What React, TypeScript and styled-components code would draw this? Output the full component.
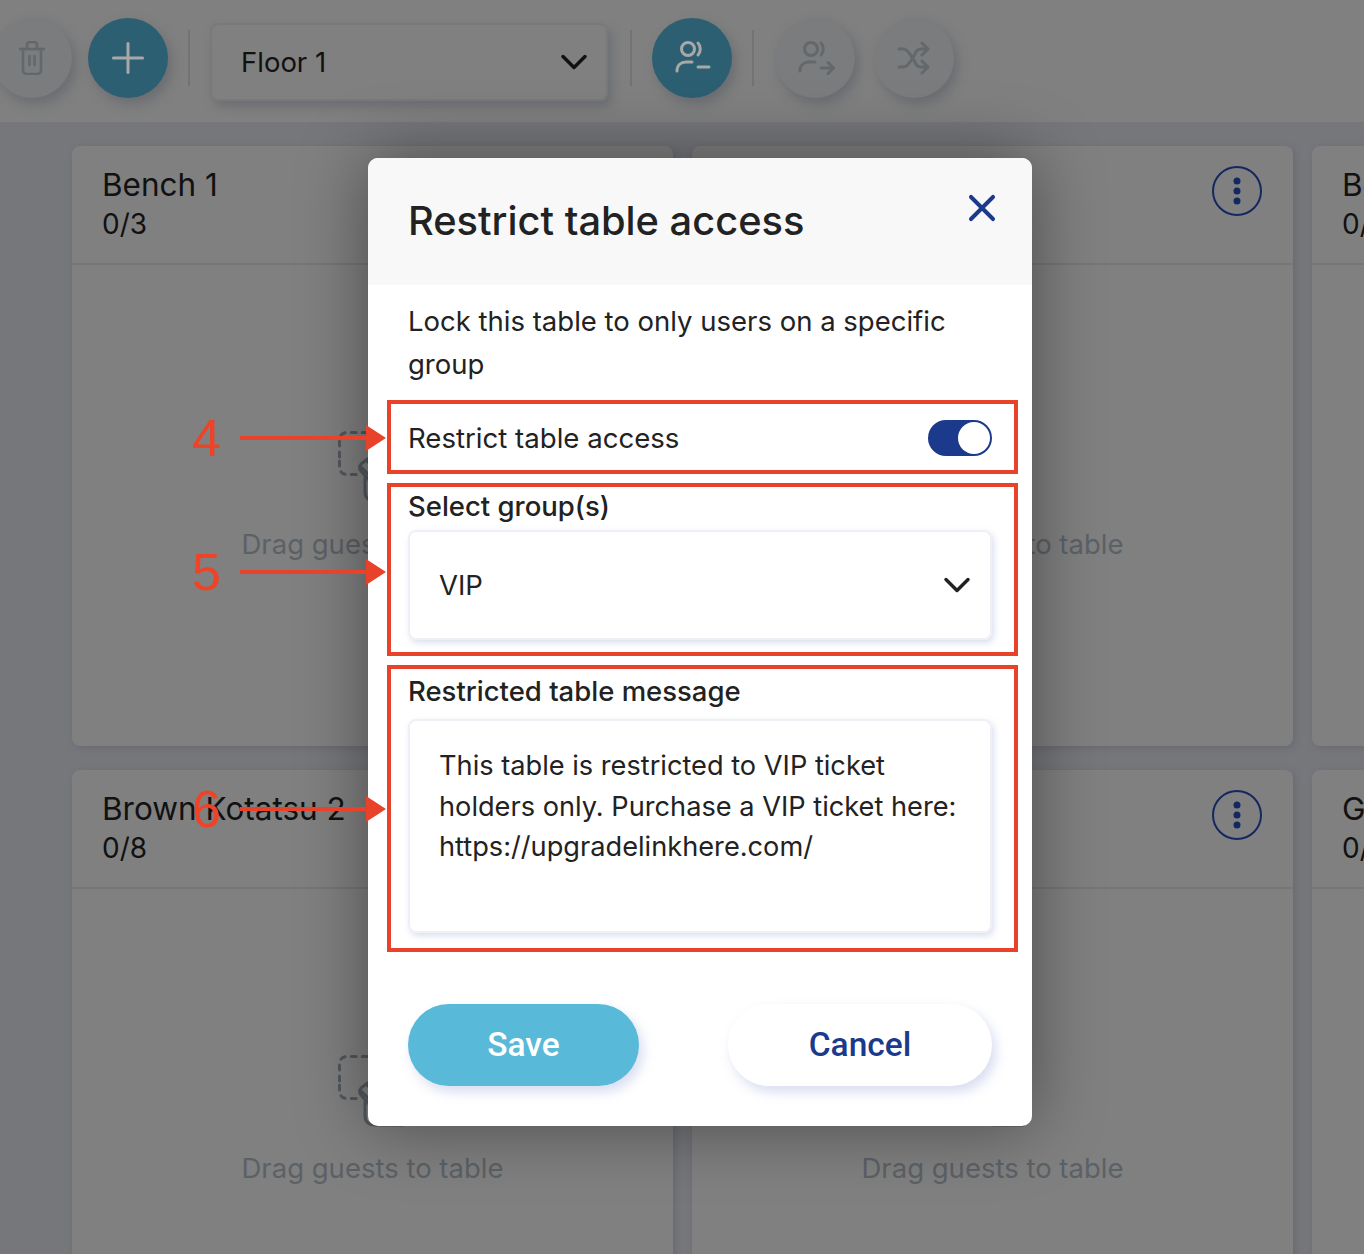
import React from 'react';
import styled, { createGlobalStyle } from 'styled-components';
import { FiChevronDown, FiPlus, FiX } from 'react-icons/fi';

const GlobalStyle = createGlobalStyle`
  html, body { margin: 0; padding: 0; }
  body { font-family: Inter, "Noto Sans", sans-serif; color: #111; }
  * { box-sizing: border-box; }
`;

const Page = styled.div`
  position: relative;
  width: 1364px;
  height: 1254px;
  overflow: hidden;
  background: #76777b;
`;

const Toolbar = styled.div`
  display: flex;
  align-items: center;
  height: 122px;
  padding-bottom: 6px;
  background: #808080;
`;

const RoundButton = styled.div<{ $active?: boolean; $gap: number }>`
  flex: none;
  display: flex;
  align-items: center;
  justify-content: center;
  width: 80px;
  height: 80px;
  margin-left: ${p => p.$gap}px;
  border-radius: 50%;
  color: ${p => (p.$active ? '#a8a8a8' : '#62686b')};
  background: ${p => (p.$active ? '#2c5f72' : '#7b7c7e')};
  box-shadow: 4px 6px 12px rgba(80, 84, 96, 0.45);
`;

const Divider = styled.div<{ $gap: number }>`
  flex: none;
  width: 2px;
  height: 56px;
  margin-left: ${p => p.$gap}px;
  background: #737373;
`;

const FloorSelect = styled.div`
  flex: none;
  display: flex;
  align-items: center;
  justify-content: space-between;
  width: 398px;
  height: 78px;
  margin: 7px 0 0 20px;
  padding: 0 10px 0 29px;
  border: 2px solid #797979;
  border-radius: 8px;
  font-size: 27.5px;
  color: #111;
  box-shadow: 4px 6px 10px rgba(80, 84, 96, 0.4);
`;

const Board = styled.div`
  display: grid;
  grid-template-columns: repeat(3, 601px);
  grid-auto-rows: 600px;
  column-gap: 19px;
  row-gap: 24px;
  padding: 24px 0 0 72px;
`;

const Card = styled.div`
  border-radius: 8px;
  background: #808080;
  box-shadow: 2px 2px 6px rgba(80, 84, 96, 0.35);
`;

const CardHeader = styled.div`
  display: flex;
  justify-content: space-between;
  height: 119px;
  padding: 18px 31px 0 30px;
  border-bottom: 2px solid #767676;
`;

const CardTitle = styled.div`
  font-size: 31.5px;
  line-height: 42px;
  color: #111;
`;

const CardCount = styled.div`
  font-size: 28px;
  line-height: 36px;
  color: #111;
`;

const KebabIcon = styled.svg`
  flex: none;
  margin-top: 2px;
`;

const CardBody = styled.div`
  display: flex;
  flex-direction: column;
  align-items: center;
  padding-top: 166px;
`;

const DragHint = styled.div`
  margin-top: 23px;
  font-size: 27.5px;
  line-height: 36px;
  color: #5c6166;
`;

const Modal = styled.div`
  position: absolute;
  top: 158px;
  left: 368px;
  width: 664px;
  height: 968px;
  border-radius: 10px;
  overflow: hidden;
  background: #fff;
`;

const ModalShadow = styled.div`
  position: absolute;
  top: 158px;
  left: 368px;
  width: 664px;
  height: 968px;
  border-radius: 10px;
  box-shadow: 0 0 70px rgba(0, 0, 0, 0.42);
`;

const ModalHeader = styled.div`
  display: flex;
  justify-content: space-between;
  height: 127px;
  padding: 0 28px 0 40px;
  background: #f8f8f8;
`;

const ModalTitle = styled.h2`
  margin: 36px 0 0;
  font-size: 39.8px;
  line-height: 54px;
  font-weight: 500;
  color: #222;
`;

const CloseButton = styled.div`
  margin-top: 28px;
  height: 44px;
  color: #1b3a8c;
`;

const ModalBody = styled.div`
  padding: 15px 40px 0;
`;

const Intro = styled.p`
  margin: 0;
  font-size: 27.5px;
  line-height: 43px;
  color: #222;
`;

const ToggleRow = styled.div`
  display: flex;
  align-items: center;
  justify-content: space-between;
  height: 36px;
  margin-top: 34px;
  font-size: 27.6px;
  color: #222;
`;

const Toggle = styled.div`
  display: flex;
  justify-content: flex-end;
  align-items: center;
  width: 64px;
  height: 36px;
  padding-right: 2px;
  border-radius: 18px;
  background: #1b3a8c;
`;

const Knob = styled.div`
  width: 32px;
  height: 32px;
  border-radius: 50%;
  background: #fff;
`;

const FieldLabel = styled.div<{ $top: number }>`
  margin-top: ${p => p.$top}px;
  font-size: 27.5px;
  line-height: 38px;
  font-weight: 500;
  color: #222;
`;

const SelectBox = styled.div`
  display: flex;
  align-items: center;
  justify-content: space-between;
  height: 110px;
  margin-top: 5px;
  padding: 0 11px 0 29px;
  border: 2px solid #eef0f6;
  border-radius: 8px;
  font-size: 27.5px;
  color: #222;
  box-shadow: 2px 3px 6px rgba(190, 198, 225, 0.55);
`;

const MessageBox = styled.div`
  height: 214px;
  margin-top: 9px;
  padding: 25px 10px 0 29px;
  border: 2px solid #eef0f6;
  border-radius: 8px;
  font-size: 27.2px;
  line-height: 40.5px;
  color: #222;
  box-shadow: 2px 3px 6px rgba(190, 198, 225, 0.55);
`;

const Actions = styled.div`
  display: flex;
  justify-content: space-between;
  margin-top: 71px;
`;

const PillButton = styled.div<{ $primary?: boolean }>`
  display: flex;
  align-items: center;
  justify-content: center;
  width: ${p => (p.$primary ? '231px' : '264px')};
  height: 82px;
  padding-bottom: 2px;
  border-radius: 41px;
  font-family: Roboto, Inter, sans-serif;
  font-size: 33.5px;
  font-weight: 500;
  color: ${p => (p.$primary ? '#fff' : '#1b3a8c')};
  background: ${p => (p.$primary ? '#58b9d9' : '#fff')};
  box-shadow: 4px 6px 12px rgba(200, 206, 235, 0.7);
`;

const Highlight = styled.div<{ $top: number; $height: number }>`
  position: absolute;
  left: 387px;
  top: ${p => p.$top}px;
  width: 631px;
  height: ${p => p.$height}px;
  border: 4px solid #e8432a;
`;

const Callout = styled.div<{ $top: number }>`
  position: absolute;
  left: 192px;
  top: ${p => p.$top}px;
  display: flex;
  align-items: center;
  height: 60px;
`;

const CalloutNumber = styled.div`
  width: 48px;
  font-family: "Liberation Sans", Arial, sans-serif;
  font-size: 52px;
  line-height: 60px;
  color: #ee4326;
`;

const TrashIcon = () => (
  <svg width="26" height="34" viewBox="0 0 26 34" fill="none" stroke="currentColor" strokeWidth="2.6" strokeLinecap="round" strokeLinejoin="round">
    <path d="M1 8h24" />
    <path d="M8 8V4c0-1.500 1-3 3-3h4c2 0 3 1.500 3 3v4" />
    <path d="M4 8v21c0 2 1.500 4 4 4h10c2.500 0 4-2 4-4V8" />
    <path d="M10.500 15v9M15.500 15v9" />
  </svg>
);

const GuestsIcon = ({ tail }: { tail: 'minus' | 'arrow' }) => (
  <svg width="40" height="40" viewBox="0 0 40 40" fill="none" stroke="currentColor" strokeWidth="3" strokeLinecap="round" strokeLinejoin="round">
    <circle cx="16" cy="11" r="6.5" />
    <path d="M26 5c3 3 3 9 0 12" />
    <path d="M5 33c0-6 4-9 9-9h6" />
    {tail === 'minus' ? (
      <path d="M26 29h11" />
    ) : (
      <path d="M26 30h12M33 24.500l5.500 5.500-5.500 5.500" />
    )}
  </svg>
);

const ShuffleIcon = () => (
  <svg width="34" height="34" viewBox="0 0 34 34" fill="none" stroke="currentColor" strokeWidth="3" strokeLinecap="round" strokeLinejoin="round">
    <path d="M2 8h4c3 0 5 2 7 5l5 8c1 3 3 5 6 5h6" />
    <path d="M2 26h4c3 0 5-2 7-5l5-8c1-3 3-5 6-5h6" />
    <path d="M25 2l6 6-6 6M25 20l6 6-6 6" />
  </svg>
);

const DragIcon = () => (
  <svg width="70" height="72" viewBox="0 0 70 72" fill="none" stroke="#53585e" strokeWidth="3" strokeLinecap="round" strokeLinejoin="round">
    <path d="M1.500 26V10c0-6 3-8.500 8-8.500h34" strokeDasharray="5 6" />
    <path d="M1.500 30v5c0 6 3 8.500 8 8.500h11" strokeDasharray="5 6" />
    <path d="M31 27l-8 6c-2 2-2 5 0 7l8 9" />
    <path d="M28 29l10 10M23 36l10 10" />
    <path d="M27 47v14c0 6 4 9 10 9h28" />
  </svg>
);

const Kebab = () => (
  <KebabIcon width="50" height="50" viewBox="0 0 50 50" fill="none">
    <circle cx="25" cy="25" r="24" stroke="#12285f" strokeWidth="2" />
    <circle cx="25" cy="15" r="3.5" fill="#12285f" />
    <circle cx="25" cy="25" r="3.5" fill="#12285f" />
    <circle cx="25" cy="35" r="3.5" fill="#12285f" />
  </KebabIcon>
);

const Arrow = () => (
  <svg width="146" height="26" viewBox="0 0 146 26">
    <path d="M0 11h126v-11l20 13-20 13v-11H0z" fill="#e8432a" />
  </svg>
);

const tables = [
  { name: 'Bench 1', count: '0/3' },
  { name: 'Bench 2', count: '0/3' },
  { name: 'Bench 3', count: '0/3' },
  { name: 'Brown Kotatsu 2', count: '0/8' },
  { name: 'Brown Kotatsu 3', count: '0/8' },
  { name: 'Green Kotatsu 1', count: '0/8' },
];

const App: React.FC = () => (
  <Page>
    <GlobalStyle />
    <Toolbar>
      <RoundButton $gap={-8}>
        <TrashIcon />
      </RoundButton>
      <RoundButton $gap={16} $active>
        <FiPlus size={50} strokeWidth={1.45} />
      </RoundButton>
      <Divider $gap={20} />
      <FloorSelect>
        Floor 1
        <FiChevronDown size={44} strokeWidth={1.9} />
      </FloorSelect>
      <Divider $gap={22} />
      <RoundButton $gap={20} $active>
        <GuestsIcon tail="minus" />
      </RoundButton>
      <Divider $gap={20} />
      <RoundButton $gap={21}>
        <GuestsIcon tail="arrow" />
      </RoundButton>
      <RoundButton $gap={19}>
        <ShuffleIcon />
      </RoundButton>
    </Toolbar>

    <Board>
      {tables.map(table => (
        <Card key={table.name}>
          <CardHeader>
            <div>
              <CardTitle>{table.name}</CardTitle>
              <CardCount>{table.count}</CardCount>
            </div>
            <Kebab />
          </CardHeader>
          <CardBody>
            <DragIcon />
            <DragHint>Drag guests to table</DragHint>
          </CardBody>
        </Card>
      ))}
    </Board>

    <ModalShadow />
    <Modal>
      <ModalHeader>
        <ModalTitle>Restrict table access</ModalTitle>
        <CloseButton>
          <FiX size={44} strokeWidth={2.2} />
        </CloseButton>
      </ModalHeader>
      <ModalBody>
        <Intro>Lock this table to only users on a specific group</Intro>
        <ToggleRow>
          Restrict table access
          <Toggle>
            <Knob />
          </Toggle>
        </ToggleRow>
        <FieldLabel $top={31}>Select group(s)</FieldLabel>
        <SelectBox>
          VIP
          <FiChevronDown size={44} strokeWidth={1.9} />
        </SelectBox>
        <FieldLabel $top={32}>Restricted table message</FieldLabel>
        <MessageBox>
          This table is restricted to VIP ticket holders only. Purchase a VIP ticket here: https://upgradelinkhere.com/
        </MessageBox>
        <Actions>
          <PillButton $primary>Save</PillButton>
          <PillButton>Cancel</PillButton>
        </Actions>
      </ModalBody>
    </Modal>

    <Highlight $top={400} $height={74} />
    <Highlight $top={483} $height={173} />
    <Highlight $top={665} $height={287} />
    <Callout $top={408}>
      <CalloutNumber>4</CalloutNumber>
      <Arrow />
    </Callout>
    <Callout $top={542}>
      <CalloutNumber>5</CalloutNumber>
      <Arrow />
    </Callout>
    <Callout $top={779}>
      <CalloutNumber>6</CalloutNumber>
      <Arrow />
    </Callout>
  </Page>
);

export default App;
